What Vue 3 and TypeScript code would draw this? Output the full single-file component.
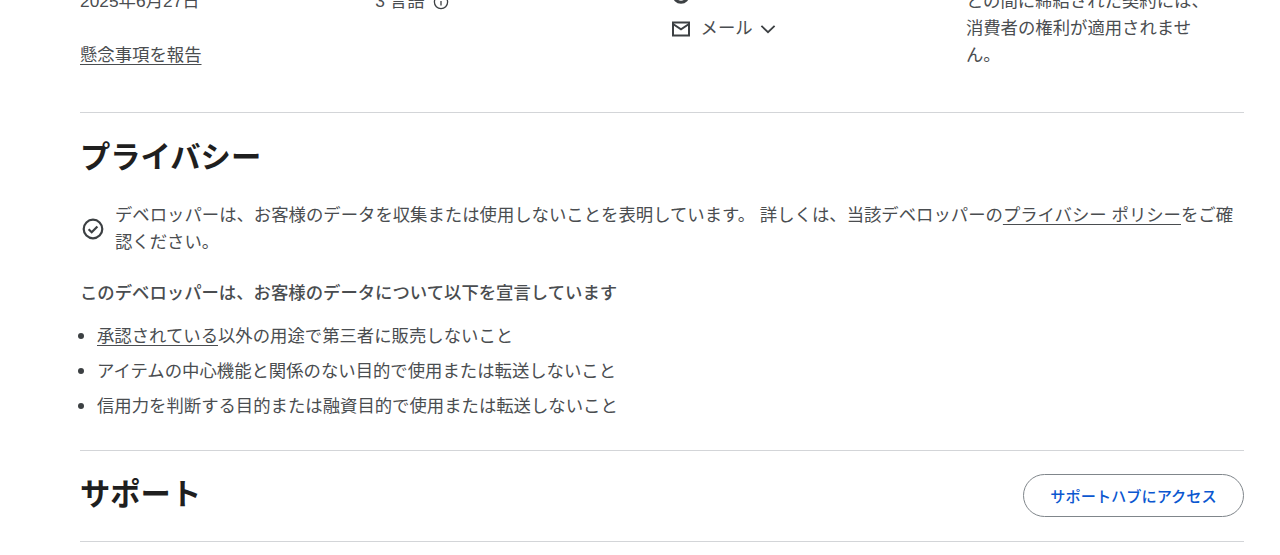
<script setup lang="ts">
const bullets: string[] = [
  'アイテムの中心機能と関係のない目的で使用または転送しないこと',
  '信用力を判断する目的または融資目的で使用または転送しないこと',
]
</script>

<template>
  <main class="page">
    <section class="details">
      <div class="col col-first">
        <p class="line">2025年6月27日</p>
        <a class="link report">懸念事項を報告</a>
      </div>
      <div class="col">
        <p class="line lang">
          <span>3 言語</span>
          <svg class="info" viewBox="0 0 16 16" width="16" height="16" fill="none" stroke="#3c4043" stroke-width="1.3">
            <circle cx="8" cy="8" r="6.6" />
            <path d="M8 7v4.4M8 4.4v1.4" />
          </svg>
        </p>
      </div>
      <div class="col">
        <p class="line site">
          <svg viewBox="0 0 20 20" width="20" height="20" fill="none" stroke="#3c4043" stroke-width="3">
            <circle cx="10" cy="10" r="7.2" />
          </svg>
        </p>
        <p class="line mail">
          <svg viewBox="0 0 20 20" width="20" height="20" fill="none" stroke="#3c4043" stroke-width="2">
            <rect x="2" y="3.5" width="16" height="13" />
            <path d="M2 5l8 5.4L18 5" />
          </svg>
          <span>メール</span>
          <svg class="chev" viewBox="0 0 16 16" width="16" height="16" fill="none" stroke="#3c4043" stroke-width="1.8">
            <path d="M1.4 4.8L8 11.2l6.6-6.4" />
          </svg>
        </p>
      </div>
      <div class="col col-last">
        <p class="para">との間に締結された契約には、消費者の権利が適用されません。</p>
      </div>
    </section>

    <section class="privacy">
      <h2>プライバシー</h2>
      <div class="notice">
        <svg viewBox="0 0 24 24" width="24" height="24" fill="none" stroke="#3c4043" stroke-width="2.2">
          <circle cx="12" cy="12" r="9.3" />
          <path d="M7.6 12.3l3.1 3 5.7-5.8" />
        </svg>
        <p>デベロッパーは、お客様のデータを収集または使用しないことを表明しています。 詳しくは、当該デベロッパーの<a class="link">プライバシー ポリシー</a>をご確認ください。</p>
      </div>
      <h3>このデベロッパーは、お客様のデータについて以下を宣言しています</h3>
      <ul>
        <li><a class="link">承認されている</a>以外の用途で第三者に販売しないこと</li>
        <li v-for="b in bullets" :key="b">{{ b }}</li>
      </ul>
    </section>

    <section class="support">
      <h2>サポート</h2>
      <button type="button">サポートハブにアクセス</button>
    </section>
  </main>
</template>

<style scoped>
.page {
  margin: -12px 36px 0 80px;
  color: #4a4d50;
  font-family: "Liberation Sans", "Noto Sans CJK JP", sans-serif;
  font-size: 17.37px;
  line-height: 27px;
}
p, h2, h3, ul { margin: 0; padding: 0; }
.details {
  display: grid;
  grid-template-columns: repeat(4, 295.3px);
  height: 124px;
  border-bottom: 1.5px solid #d3d5d8;
}
.line { display: flex; align-items: center; height: 27px; }
.report { display: inline-block; margin-top: 27px; }
.link { color: inherit; text-decoration: underline; text-underline-offset: 3px; text-decoration-thickness: 1px; }
.lang { gap: 8px; }
.info { margin-top: 1px; }
.site { margin-top: -7px; }
.mail { gap: 10px; margin-top: 7px; }
.chev { margin-left: -3px; }
.para { width: 246px; }
.privacy { padding-top: 26.5px; }
h2 {
  color: #1f1f1f;
  font-size: 30.3px;
  font-weight: 700;
  line-height: 36px;
}
.notice {
  display: flex;
  align-items: center;
  gap: 10px;
  margin-top: 26.5px;
}
.notice svg { flex: none; margin-left: 1px; margin-bottom: 1px; }
.notice p { flex: 1; }
h3 {
  margin-top: 24px;
  font-size: 17.37px;
  line-height: 27px;
  font-weight: 500;
}
ul { margin-top: 15px; padding-left: 17px; }
li { line-height: 27px; margin-bottom: 7px; }
li::marker { color: #3c4043; font-size: 20px; }
.support {
  display: flex;
  align-items: center;
  justify-content: space-between;
  margin-top: 29.5px;
  padding: 23px 0 24px;
  border-top: 1.5px solid #d3d5d8;
  border-bottom: 1.5px solid #d3d5d8;
}
button {
  width: 221px;
  height: 43px;
  padding: 0 0 1px;
  border: 1.5px solid #80868b;
  border-radius: 22px;
  background: #fff;
  color: #0b57d0;
  font-family: inherit;
  font-size: 15.2px;
  font-weight: 500;
}
</style>

<style>
html, body { overflow: hidden; background: #fff; }
</style>
